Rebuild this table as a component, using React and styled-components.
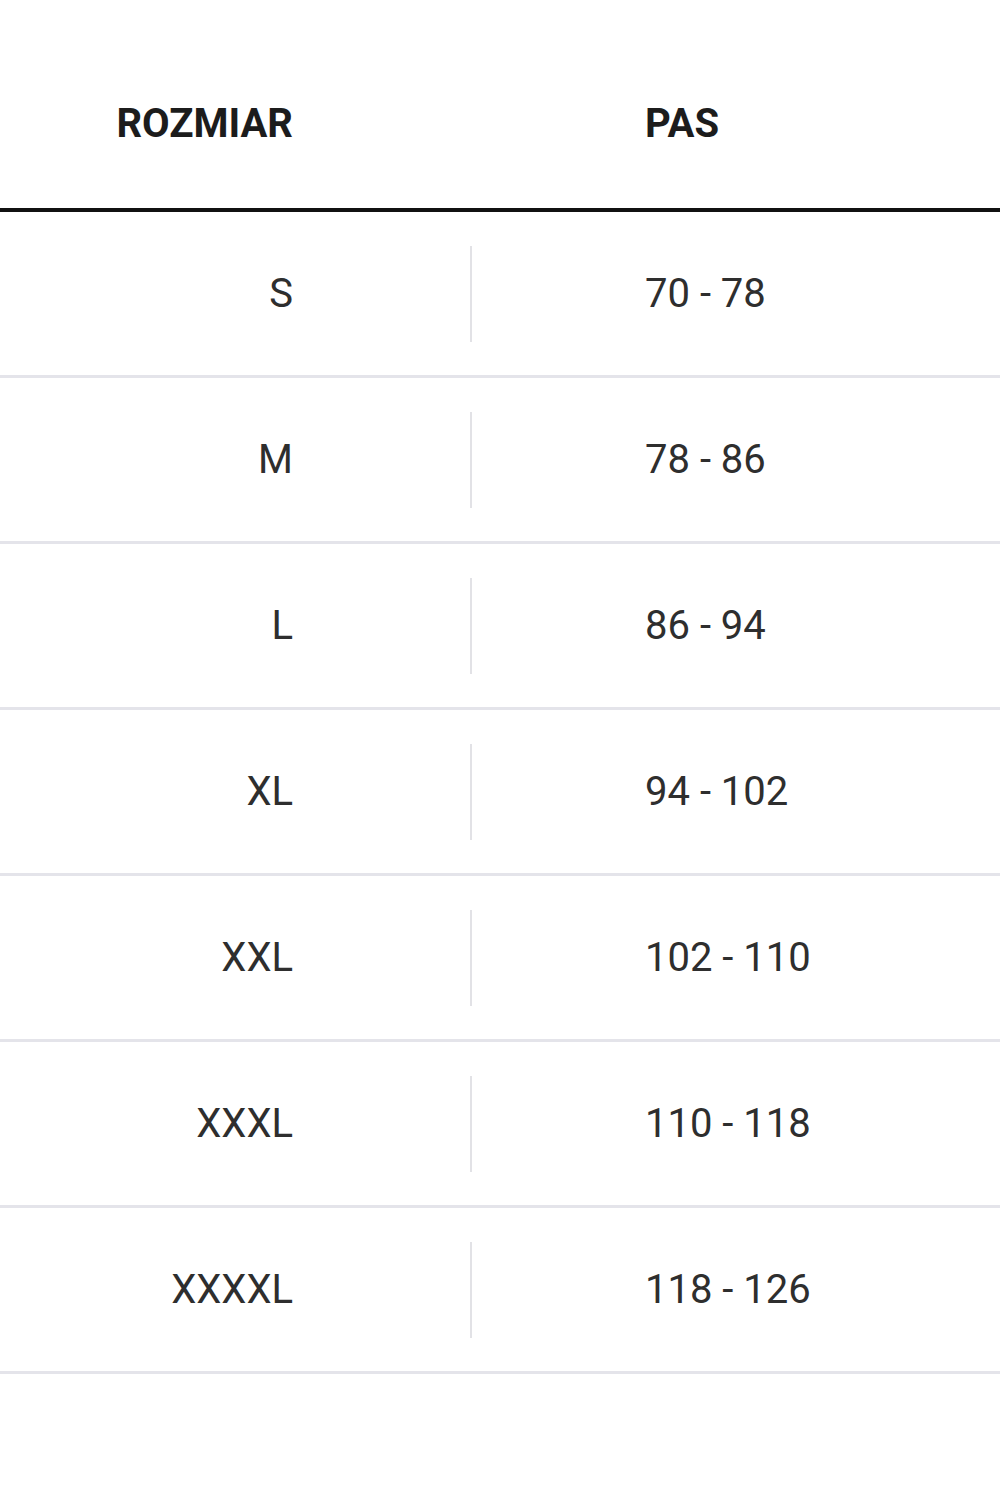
import React from 'react';
import styled, { createGlobalStyle } from 'styled-components';

const GlobalStyle = createGlobalStyle`
  html, body {
    margin: 0;
    padding: 0;
    background: #fff;
  }
  body {
    font-family: Roboto, "Liberation Sans", Arial, sans-serif;
    color: #2b2b2b;
  }
`;

const sizes = [
  ['S', '70 - 78'],
  ['M', '78 - 86'],
  ['L', '86 - 94'],
  ['XL', '94 - 102'],
  ['XXL', '102 - 110'],
  ['XXXL', '110 - 118'],
  ['XXXXL', '118 - 126'],
];

export default function App() {
  return (
    <>
      <GlobalStyle />
      <Table>
        <HeadRow>
          <HeadSize>ROZMIAR</HeadSize>
          <span />
          <HeadValue>PAS</HeadValue>
        </HeadRow>
        {sizes.map(([size, waist]) => (
          <Row key={size}>
            <SizeCell>{size}</SizeCell>
            <Divider />
            <ValueCell>{waist}</ValueCell>
          </Row>
        ))}
      </Table>
    </>
  );
}

const Table = styled.div`
  width: 1000px;
  display: flex;
  flex-direction: column;
`;

const HeadRow = styled.div`
  display: grid;
  grid-template-columns: 470px 3px 1fr;
  align-items: center;
  box-sizing: border-box;
  height: 212px;
  padding-top: 40px;
  border-bottom: 4px solid #111;
  font-size: 40px;
  font-weight: 700;
  color: #1c1c1c;
`;

const HeadSize = styled.div`
  text-align: right;
  padding-right: 177px;
  line-height: 1;
`;

const HeadValue = styled.div`
  padding-left: 172px;
  line-height: 1;
`;

const Row = styled.div`
  display: grid;
  grid-template-columns: 470px 3px 1fr;
  align-items: center;
  box-sizing: border-box;
  height: 166px;
  border-bottom: 3px solid #e4e4ea;
  font-size: 40px;
  font-weight: 400;
  color: #2e2e2e;
`;

const SizeCell = styled.div`
  text-align: right;
  padding-right: 177px;
  line-height: 1;
`;

const Divider = styled.div`
  width: 2px;
  height: 96px;
  background: #e2e2e6;
`;

const ValueCell = styled.div`
  padding-left: 172px;
  line-height: 1;
`;
